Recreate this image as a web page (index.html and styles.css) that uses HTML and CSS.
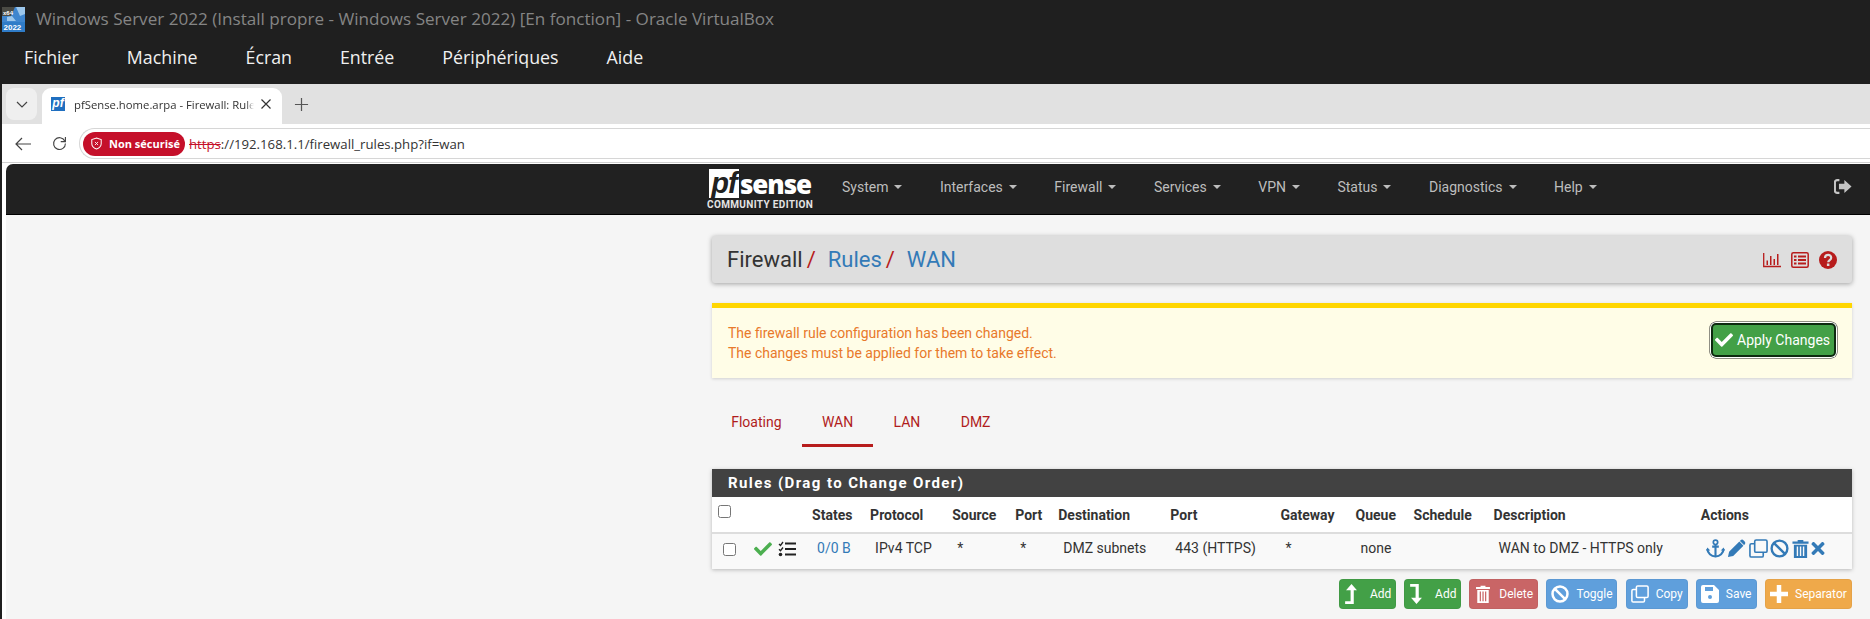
FILE: index.html
```html
<!DOCTYPE html>
<html lang="fr">
<head>
<meta charset="utf-8">
<title>pfSense.home.arpa - Firewall: Rules: WAN</title>
<link rel="stylesheet" href="styles.css">
</head>
<body>
<header class="vb-title">
  <svg class="vb-icon" viewBox="0 0 23 25">
    <rect width="23" height="25" fill="#3f86cf"/>
    <path d="M0 0h13l-4 9H0z" fill="#4a4a44"/>
    <path d="M14 0h9v7l-5 2zM5 10l5-1 4 5H5z" fill="#9cc7ec"/>
    <path d="M0 15h23v10H0z" fill="#2f7cc8"/>
    <text x="1" y="8" class="vb-icon-top">x64</text>
    <text x="1.500" y="23" class="vb-icon-bottom">2022</text>
  </svg>
  <span>Windows Server 2022 (Install propre - Windows Server 2022) [En fonction] - Oracle VirtualBox</span>
</header>
<nav class="vb-menu">
  <span>Fichier</span><span>Machine</span><span>Écran</span><span>Entrée</span><span>Périphériques</span><span>Aide</span>
</nav>
<div class="browser">
  <div class="tabstrip">
    <div class="tab-search">
      <svg viewBox="0 0 14 14" class="ico-chev"><path d="M2 5l5 5 5-5" fill="none" stroke="#444" stroke-width="1.2"/></svg>
    </div>
    <div class="tab">
      <span class="favicon">pf</span>
      <span class="tab-title">pfSense.home.arpa - Firewall: Rules: WAN</span>
      <svg viewBox="0 0 12 12" class="ico-close"><path d="M1.5 1.5l9 9M10.5 1.5l-9 9" stroke="#333" stroke-width="1.2"/></svg>
    </div>
    <svg viewBox="0 0 16 16" class="ico-plus"><path d="M8 1v14M1 8h14" stroke="#555" stroke-width="1.3"/></svg>
  </div>
  <div class="toolbar">
    <svg viewBox="0 0 18 16" class="ico-back"><path d="M17 8H2M8 2L2 8l6 6" fill="none" stroke="#444" stroke-width="1.2"/></svg>
    <svg viewBox="0 0 16 16" class="ico-reload"><path d="M13.6 5.2A6.3 6.3 0 1 0 14.3 8" fill="none" stroke="#444" stroke-width="1.2"/><path d="M14.3 1v5h-5" fill="none" stroke="#444" stroke-width="1.2"/></svg>
    <div class="omnibox">
      <span class="insecure">
        <svg viewBox="0 0 14 16" class="ico-shield"><path d="M7 1l6 2v5c0 3.500-2.500 5.800-6 7-3.500-1.200-6-3.500-6-7V3z" fill="none" stroke="#fff" stroke-width="1.300"/><path d="M5 6l4 4M9 6l-4 4" stroke="#fff" stroke-width="1.100"/></svg>
        Non sécurisé
      </span>
      <span class="url"><s>https</s>://192.168.1.1/firewall_rules.php?if=wan</span>
    </div>
  </div>
  <div class="page">
    <div class="pf-nav">
      <div class="pf-logo">
        <div class="pf-logo-top"><span class="pf-logo-pf">pf</span><span class="pf-logo-sense">sense</span></div>
        <div class="pf-logo-ce">COMMUNITY EDITION</div>
      </div>
      <ul class="pf-menu">
        <li>System<i class="caret"></i></li>
        <li>Interfaces<i class="caret"></i></li>
        <li>Firewall<i class="caret"></i></li>
        <li>Services<i class="caret"></i></li>
        <li>VPN<i class="caret"></i></li>
        <li>Status<i class="caret"></i></li>
        <li>Diagnostics<i class="caret"></i></li>
        <li>Help<i class="caret"></i></li>
      </ul>
      <svg viewBox="0 0 20 16" class="ico-logout"><path d="M6 1H3.500A2.500 2.500 0 0 0 1 3.500v9A2.500 2.500 0 0 0 3.500 15H6" fill="none" stroke="#c4c4c4" stroke-width="2.400"/><path d="M5.500 5h6V.8L19.500 8l-8 7.200V11h-6z" fill="#c4c4c4"/></svg>
    </div>
    <main class="content">
      <div class="crumbs">
        <h1><span>Firewall</span><em>/</em><a>Rules</a><em>/</em><a>WAN</a></h1>
        <div class="crumb-icons">
          <svg viewBox="0 0 18 18" class="ico-crumb"><path d="M.7 2v13.500H18" fill="none" stroke="#b71c1c" stroke-width="1.300"/><path d="M3.500 9.500h1.500v4.500H3.500zM7 5h1.500v9H7zM10.500 8h1.500v6h-1.500zM14 3h1.500v11H14z" fill="#b71c1c"/></svg>
          <svg viewBox="0 0 18 18" class="ico-crumb"><rect x=".8" y="1.800" width="16.400" height="14.400" rx="1.500" fill="none" stroke="#b71c1c" stroke-width="1.500"/><path d="M3 5.500h2.500M7 5.500h8M3 9h2.500M7 9h8M3 12.500h2.500M7 12.500h8" stroke="#b71c1c" stroke-width="1.800"/></svg>
          <svg viewBox="0 0 18 18" class="ico-crumb"><circle cx="9" cy="9" r="9" fill="#b71c1c"/><path d="M6 7c0-4 6.200-4 6.200-.3 0 2.300-3 2.300-3 4.500" fill="none" stroke="#ddd" stroke-width="2.200"/><rect x="7.900" y="12.500" width="2.500" height="2.500" fill="#ddd"/></svg>
        </div>
      </div>
      <div class="alert">
        <p>The firewall rule configuration has been changed.<br>The changes must be applied for them to take effect.</p>
        <button class="apply">
          <svg viewBox="0 0 512 512" class="ico-apply"><path d="M173.898 439.404l-166.4-166.4c-9.997-9.997-9.997-26.206 0-36.204l36.203-36.204c9.997-9.998 26.207-9.998 36.204 0L192 312.69 432.095 72.596c9.997-9.997 26.207-9.997 36.204 0l36.203 36.204c9.997 9.997 9.997 26.206 0 36.204l-294.4 294.401c-9.998 9.997-26.207 9.997-36.204-.001z"/></svg>
          Apply Changes
        </button>
      </div>
      <ul class="rule-tabs">
        <li>Floating</li><li class="active">WAN</li><li>LAN</li><li>DMZ</li>
      </ul>
      <section class="panel">
        <h2>Rules (Drag to Change Order)</h2>
        <table>
          <colgroup>
            <col class="c-cb"><col class="c-ic"><col class="c-st"><col class="c-pr"><col class="c-so"><col class="c-po"><col class="c-de"><col class="c-dp"><col class="c-gw"><col class="c-qu"><col class="c-sc"><col class="c-ds"><col class="c-ac">
          </colgroup>
          <thead>
            <tr>
              <th class="cb-head"><input type="checkbox" class="cb"></th>
              <th></th><th>States</th><th>Protocol</th><th>Source</th><th>Port</th><th>Destination</th><th>Port</th><th>Gateway</th><th>Queue</th><th>Schedule</th><th>Description</th><th>Actions</th>
            </tr>
          </thead>
          <tbody>
            <tr>
              <td class="cb-cell"><input type="checkbox" class="cb"></td>
              <td class="status-cell">
                <svg viewBox="0 0 512 512" class="ico-pass"><path d="M173.898 439.404l-166.4-166.4c-9.997-9.997-9.997-26.206 0-36.204l36.203-36.204c9.997-9.998 26.207-9.998 36.204 0L192 312.69 432.095 72.596c9.997-9.997 26.207-9.997 36.204 0l36.203 36.204c9.997 9.997 9.997 26.206 0 36.204l-294.4 294.401c-9.998 9.997-26.207 9.997-36.204-.001z"/></svg>
                <svg viewBox="0 0 18 16" class="ico-tasks"><path d="M1 3l1.500 1.500L5 1" fill="none" stroke="#222" stroke-width="1.300"/><path d="M1 8.200l1.500 1.500L5 6.500" fill="none" stroke="#222" stroke-width="1.300"/><circle cx="2.500" cy="13.500" r="1.800" fill="#222"/><path d="M7 2.500h11M7 8h11M7 13.500h11" stroke="#222" stroke-width="2"/></svg>
              </td>
              <td><a>0/0 B</a></td>
              <td>IPv4 TCP</td>
              <td>*</td>
              <td>*</td>
              <td>DMZ subnets</td>
              <td>443 (HTTPS)</td>
              <td>*</td>
              <td>none</td>
              <td></td>
              <td>WAN to DMZ - HTTPS only</td>
              <td class="actions">
                <svg viewBox="0 0 20 20" class="act"><circle cx="10" cy="3.500" r="2.300" fill="none" stroke="#337ab7" stroke-width="1.800"/><path d="M10 5.500V18M6.500 8h7" stroke="#337ab7" stroke-width="2.200" fill="none"/><path d="M1.500 10.500c0 4.500 4 7.500 8.500 8 4.500-.5 8.500-3.500 8.500-8" fill="none" stroke="#337ab7" stroke-width="2.200"/><path d="M0 12l1.500-3 3 3zM20 12l-1.500-3-3 3z" fill="#337ab7"/></svg>
                <svg viewBox="0 0 20 20" class="act"><path d="M1 19l1.200-5.500L13 2.700l4.300 4.300L6.500 17.800zM14.300 1.400c1-1 2.200-1 3 0l1.300 1.300c.9.900.9 2 0 3l-.7.700-4.300-4.300z" fill="#337ab7"/></svg>
                <svg viewBox="0 0 20 20" class="act"><rect x="6" y="1" width="13" height="13" rx="1.500" fill="none" stroke="#337ab7" stroke-width="1.700"/><path d="M6 5H2.500A1.500 1.500 0 0 0 1 6.500v11A1.500 1.500 0 0 0 2.500 19h11a1.500 1.500 0 0 0 1.500-1.500V14" fill="none" stroke="#337ab7" stroke-width="1.700"/></svg>
                <svg viewBox="0 0 20 20" class="act"><circle cx="10" cy="10" r="8.300" fill="none" stroke="#337ab7" stroke-width="2.500"/><path d="M4 4l12 12" stroke="#337ab7" stroke-width="2.500"/></svg>
                <svg viewBox="0 0 18 20" class="act act-trash"><path d="M6 2.500V1h6v1.500h5.500V5H.5V2.500zM2 6h14v14H2zM5 8v10h1.500V8zM8.300 8v10h1.500V8zM11.500 8v10H13V8z" fill="#337ab7" fill-rule="evenodd"/></svg>
                <svg viewBox="0 0 352 512" class="act act-x"><path fill="#337ab7" d="M242.72 256l100.07-100.07c12.28-12.28 12.28-32.19 0-44.48l-22.24-22.24c-12.28-12.28-32.19-12.28-44.48 0L176 189.28 75.93 89.21c-12.28-12.28-32.19-12.28-44.48 0L9.21 111.45c-12.28 12.28-12.28 32.19 0 44.48L109.28 256 9.21 356.07c-12.28 12.28-12.28 32.19 0 44.48l22.24 22.24c12.28 12.28 32.2 12.28 44.48 0L176 322.72l100.07 100.07c12.28 12.28 32.2 12.28 44.48 0l22.24-22.24c12.28-12.28 12.28-32.19 0-44.48L242.72 256z"/></svg>
              </td>
            </tr>
          </tbody>
        </table>
      </section>
      <div class="btn-row">
        <button class="btn green"><svg viewBox="0 0 14 22" class="btn-ico"><path d="M7 0l6 7H9.500v15H0v-3h6V7H1z" fill="#fff"/></svg><span>Add</span></button>
        <button class="btn green"><svg viewBox="0 0 14 22" class="btn-ico"><path d="M7 22l6-7H9.500V0H0v3h6v12H1z" fill="#fff"/></svg><span>Add</span></button>
        <button class="btn red"><svg viewBox="0 0 18 22" class="btn-ico btn-ico-wide"><path d="M6 2.500V1h6v1.500h5.500V5H.5V2.500zM2 6h14v16H2zM5 8v12h1.500V8zM8.300 8v12h1.500V8zM11.500 8v12H13V8z" fill="#fff" fill-rule="evenodd"/></svg><span>Delete</span></button>
        <button class="btn blue"><svg viewBox="0 0 20 20" class="btn-ico btn-ico-wide"><circle cx="10" cy="10" r="8.300" fill="none" stroke="#fff" stroke-width="2.800"/><path d="M4 4l12 12" stroke="#fff" stroke-width="2.800"/></svg><span>Toggle</span></button>
        <button class="btn blue"><svg viewBox="0 0 20 20" class="btn-ico btn-ico-wide"><rect x="6" y="1" width="13" height="13" rx="1.500" fill="none" stroke="#fff" stroke-width="1.700"/><path d="M6 5H2.500A1.500 1.500 0 0 0 1 6.500v11A1.500 1.500 0 0 0 2.500 19h11a1.500 1.500 0 0 0 1.500-1.500V14" fill="none" stroke="#fff" stroke-width="1.700"/></svg><span>Copy</span></button>
        <button class="btn blue"><svg viewBox="0 0 18 18" class="btn-ico btn-ico-wide"><path d="M2 0h11l5 5v11a2 2 0 0 1-2 2H2a2 2 0 0 1-2-2V2a2 2 0 0 1 2-2zM4 2v4h8V2z" fill="#fff" fill-rule="evenodd"/><circle cx="9" cy="12" r="2" fill="#5f9fdc"/></svg><span>Save</span></button>
        <button class="btn orange"><svg viewBox="0 0 16 16" class="btn-ico btn-ico-wide"><path d="M6 0h4v6h6v4h-6v6H6v-6H0V6h6z" fill="#fff"/></svg><span>Separator</span></button>
      </div>
    </main>
  </div>
</div>
</body>
</html>
```
FILE: styles.css
```css
* { box-sizing: border-box; }
html, body { margin: 0; height: 619px; overflow: hidden; background: #1f1f1f; }
body { font-family: "Open Sans", "Noto Sans", sans-serif; }
svg { display: block; flex: none; }

/* VirtualBox window */
.vb-title { height: 38px; display: flex; align-items: center; gap: 11px; padding: 0 0 2px 2px; color: #858585; font-size: 17.100px; }
.vb-icon { width: 23px; height: 25px; margin-top: 2px; }
.vb-icon-top { font: 700 6px "Liberation Sans", sans-serif; fill: #fff; }
.vb-icon-bottom { font: 700 8px "Liberation Sans", sans-serif; fill: #fff; }
.vb-menu { height: 46px; display: flex; align-items: center; padding: 0 0 8px 24px; gap: 48px; color: #f0f0f0; font-size: 17.800px; }

/* Chrome */
.browser { height: 535px; margin-left: 2px; background: #fff; display: flex; flex-direction: column; }
.tabstrip { height: 40px; background: #e1e1e1; display: flex; align-items: flex-end; padding-left: 4px; flex: none; position: relative; }
.tab-search { width: 31px; height: 32px; margin-bottom: 4px; background: #efefef; border-radius: 8px; display: flex; align-items: center; justify-content: center; }
.ico-chev { width: 14px; height: 14px; }
.tab { width: 240px; height: 36px; margin-left: 5px; background: #fff; border-radius: 9px 9px 0 0; display: flex; align-items: center; padding: 0 10px 4px 9px; }
.favicon { width: 14px; height: 14px; background: #1f6fc0; color: #fff; font: italic 700 12px/13px "Liberation Sans", sans-serif; text-align: center; flex: none; }
.tab-title { width: 184px; margin: 0 6px 0 9px; font-size: 11.300px; color: #333; white-space: nowrap; overflow: hidden; -webkit-mask-image: linear-gradient(to right, #000 172px, transparent); mask-image: linear-gradient(to right, #000 172px, transparent); }
.ico-close { width: 12px; height: 12px; }
.ico-plus { width: 15px; height: 15px; margin: 0 0 12px 12px; }
.toolbar { height: 39px; background: #fff; display: flex; align-items: center; padding: 1px 0 0 12px; flex: none; border-bottom: 1px solid #d0d0d0; }
.ico-back { width: 18px; height: 16px; }
.ico-reload { width: 15px; height: 15px; margin-left: 20px; }
.omnibox { flex: 1; height: 31px; margin-left: 12px; border: 1px solid #d6d6d6; border-right: 0; border-radius: 16px 0 0 16px; display: flex; align-items: center; gap: 4px; padding-left: 3px; }
.insecure { height: 24px; width: 102px; background: #c5102a; border-radius: 12px; color: #fff; font-size: 11px; font-weight: 700; display: flex; align-items: center; gap: 7px; padding-left: 8px; white-space: nowrap; }
.ico-shield { width: 11px; height: 13px; }
.url { font-size: 13.200px; color: #333; }
.url s { color: #c5102a; }

/* pfSense page */
.page { flex: 1; background: #fff; padding-left: 4px; padding-top: 1px; display: flex; flex-direction: column; min-height: 0; font-family: Roboto, sans-serif; font-size: 14px; color: #333; }
.pf-nav { height: 51px; flex: none; background: #212121; border-radius: 7px 0 0 0; border-bottom: 1px solid #000; display: flex; align-items: center; padding-left: 701px; padding-right: 18px; }
.pf-logo { width: 108px; color: #fff; margin-top: 1px; }
.pf-logo-top { display: flex; align-items: flex-end; height: 29px; padding-left: 2px; }
.pf-logo-pf { background: #fff; color: #212121; font: italic 700 29px/28px "Liberation Sans", sans-serif; width: 30px; text-align: center; height: 29px; letter-spacing: -1px; }
.pf-logo-sense { font: 800 26px/27px "Open Sans", sans-serif; letter-spacing: -1.100px; margin-left: 1px; }
.pf-logo-ce { font: 700 10px/12px Roboto, sans-serif; letter-spacing: .35px; white-space: nowrap; color: #e4e4e4; margin-top: 1px; }
.pf-menu { display: flex; gap: 37.500px; list-style: none; margin: -5px 0 0 27px; padding: 0; color: #bdbdbd; flex: 1; }
.pf-menu li { display: flex; align-items: center; }
.caret { width: 0; height: 0; margin-left: 6px; border-top: 4px solid #bdbdbd; border-left: 4px solid transparent; border-right: 4px solid transparent; }
.ico-logout { width: 18px; height: 15px; margin-top: -6px; }

.content { flex: 1; background: #f5f5f5; padding: 21px 18px 0 706px; display: flex; flex-direction: column; }
.crumbs { height: 47px; flex: none; background: #dedede; border-radius: 3px; box-shadow: 0 1px 5px rgba(0,0,0,.35); display: flex; align-items: center; justify-content: space-between; padding: 0 15px; }
.crumbs h1 { margin: 0; font-size: 22px; font-weight: 400; color: #333; display: flex; align-items: center; }
.crumbs em { font-style: normal; color: #b71c1c; margin: 0 12px 0 4px; font-size: 22px; }
.crumbs a { color: #337ab7; }
.crumb-icons { display: flex; gap: 10px; }
.ico-crumb { width: 18px; height: 18px; }

.alert { height: 75px; flex: none; margin-top: 20px; background: #fffde7; border-top: 5px solid #ffd600; box-shadow: 0 1px 3px rgba(0,0,0,.15); display: flex; align-items: center; justify-content: space-between; padding: 0 16px 0 16px; }
.alert p { margin: 0 0 1px; color: #e8792b; font-size: 14px; line-height: 20px; }
.apply { width: 125px; height: 34px; margin-bottom: 6px; background: #43a047; border: 2px solid #0e2a10; box-shadow: 0 0 0 1px #fff, 0 0 0 1.500px #222; border-radius: 5px; color: #fff; font: 14px Roboto, sans-serif; display: flex; align-items: center; gap: 4px; padding: 0 0 0 2px; white-space: nowrap; }
.ico-apply { width: 18px; height: 18px; fill: #fff; }

.rule-tabs { display: flex; list-style: none; margin: 25px 0 0 -1px; padding: 0; height: 44px; flex: none; color: #b01c1c; }
.rule-tabs li { padding: 11px 20.200px 0; }
.rule-tabs .active { border-bottom: 3px solid #b71c1c; height: 44px; }

.panel { margin-top: 22px; box-shadow: 0 1px 4px rgba(0,0,0,.25); flex: none; }
.panel h2 { height: 28px; margin: 0; background: #424242; color: #fff; font-size: 15px; line-height: 28px; font-weight: 700; letter-spacing: 1.400px; padding-left: 16px; }
table { width: 100%; table-layout: fixed; border-collapse: collapse; }
.c-cb { width: 34px; } .c-ic { width: 61px; } .c-st { width: 58px; } .c-pr { width: 82px; }
.c-so { width: 63px; } .c-po { width: 43px; } .c-de { width: 112px; } .c-dp { width: 110px; }
.c-gw { width: 75px; } .c-qu { width: 58px; } .c-sc { width: 80px; } .c-ds { width: 207px; } .c-ac { width: 156px; }
th { height: 36px; background: #fff; border-bottom: 2px solid #ddd; text-align: left; padding: 0 0 0 5px; font-weight: 700; color: #333; white-space: nowrap; font-size: 14px; }
td { height: 35px; background: #f9f9f9; padding: 0 0 8px 10px; white-space: nowrap; color: #333; }
td a { color: #337ab7; }
.cb { width: 13px; height: 13px; margin: 0; display: block; }
.cb-head { padding: 0 0 6px 6px; }
.cb-cell { padding: 0 0 4px 11px; }
.status-cell { padding: 0 0 6px 8px; }
.status-cell svg { display: inline-block; vertical-align: middle; }
.ico-pass { width: 18px; height: 18px; fill: #4caf50; }
.ico-tasks { width: 18px; height: 16px; margin-left: 2px; }
.actions { display: flex; align-items: center; gap: 2.500px; height: 35px; padding-bottom: 6px; }
.act { width: 19px; height: 19px; }
.act-trash { width: 17px; }
.act-x { width: 14px; }

.btn-row { display: flex; justify-content: flex-end; gap: 8.200px; margin-top: 10px; }
.btn { height: 30px; border: 1px solid rgba(0,0,0,.04); border-radius: 4px; color: #fff; font: 12px Roboto, sans-serif; display: flex; align-items: center; padding: 0 0 0 4px; white-space: nowrap; }
.btn span { margin-left: 7px; }
.green { background: #43a047; width: 57px; }
.red { background: #c96566; width: 69px; }
.blue { background: #5f9fdc; width: 71px; }
.blue:nth-of-type(5) { width: 62px; }
.blue:nth-of-type(6) { width: 61px; }
.orange { background: #efa94a; width: 87px; }
.btn-ico { width: 13px; height: 20px; margin: 0 5px 0 1px; }
.btn-ico-wide { width: 18px; height: 18px; margin: 0; }
```
